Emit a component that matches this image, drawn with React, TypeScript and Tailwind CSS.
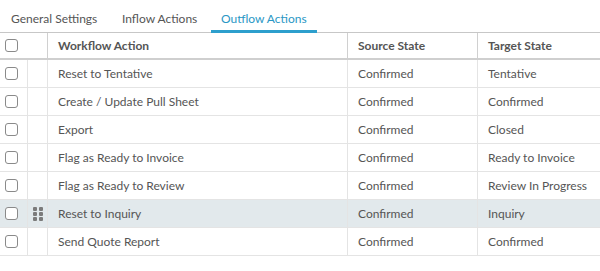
import React from 'react';

const rows = [
  { action: 'Reset to Tentative', source: 'Confirmed', target: 'Tentative' },
  { action: 'Create / Update Pull Sheet', source: 'Confirmed', target: 'Confirmed' },
  { action: 'Export', source: 'Confirmed', target: 'Closed' },
  { action: 'Flag as Ready to Invoice', source: 'Confirmed', target: 'Ready to Invoice' },
  { action: 'Flag as Ready to Review', source: 'Confirmed', target: 'Review In Progress' },
  { action: 'Reset to Inquiry', source: 'Confirmed', target: 'Inquiry', active: true },
  { action: 'Send Quote Report', source: 'Confirmed', target: 'Confirmed' },
];

function Checkbox() {
  return <span className="block w-[13px] h-[13px] rounded-[3px] border border-[#8a8a8a] bg-white" />;
}

function DragHandle() {
  return (
    <svg width="10" height="14" viewBox="0 0 10 14" className="text-[#7b7b7b]">
      {[0, 5, 10].map((y) => (
        <g key={y}>
          <rect x="0" y={y} width="4" height="4" rx="1" fill="currentColor" />
          <rect x="6" y={y} width="4" height="4" rx="1" fill="currentColor" />
        </g>
      ))}
    </svg>
  );
}

export default function App() {
  return (
    <div className="w-[600px] h-[271px] bg-white text-[12px] text-[#555] font-['Lato',sans-serif]">
      <div className="flex h-[33px] border-b border-[#c8c8c8] whitespace-nowrap">
        <div className="w-[111px] pl-[11px] pt-[10px]">General Settings</div>
        <div className="w-[100px] pl-[11px] pt-[10px]">Inflow Actions</div>
        <div className="w-[106px] pl-[10px] pt-[10px] text-[#2a97c5] border-b-[3px] border-[#2d9fcd] mb-[-1px]">
          Outflow Actions
        </div>
      </div>

      <div className="flex h-[27px] items-center border-b-2 border-[#cfcfcf] shadow-[0_1px_2px_rgba(0,0,0,0.08)] font-bold text-[#555]">
        <div className="w-[48px] h-full flex items-center pl-[5px] border-r border-[#d0d0d0]">
          <Checkbox />
        </div>
        <div className="w-[300px] h-full flex items-center pl-[10px] border-r border-[#d0d0d0]">Workflow Action</div>
        <div className="w-[130px] h-full flex items-center pl-[10px] border-r border-[#d0d0d0]">Source State</div>
        <div className="flex-1 h-full flex items-center pl-[10px]">Target State</div>
      </div>

      {rows.map((r) => (
        <div
          key={r.action}
          className={`flex h-[28px] items-center border-b border-[#e4e4e4] ${r.active ? 'bg-[#e2e9ec]' : 'bg-white'}`}
        >
          <div className="w-[28px] h-full flex items-center pl-[5px] border-r border-[#e4e4e4]">
            <Checkbox />
          </div>
          <div className="w-[20px] h-full flex items-center justify-center border-r border-[#e4e4e4]">
            {r.active && <DragHandle />}
          </div>
          <div className="w-[300px] h-full flex items-center pl-[10px] pt-[1px] border-r border-[#e4e4e4]">{r.action}</div>
          <div className="w-[130px] h-full flex items-center pl-[10px] pt-[1px] border-r border-[#e4e4e4]">{r.source}</div>
          <div className="flex-1 h-full flex items-center pl-[10px] pt-[1px]">{r.target}</div>
        </div>
      ))}
    </div>
  );
}
